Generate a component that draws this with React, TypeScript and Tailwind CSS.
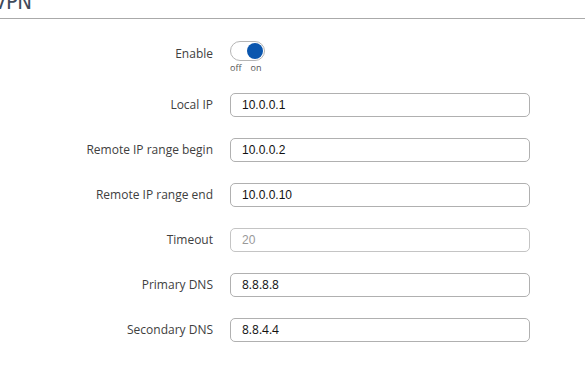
export default function App() {
  const rows: { label: string; value: string; disabled?: boolean; font?: string }[] = [
    { label: 'Local IP', value: '10.0.0.1', font: 'arial' },
    { label: 'Remote IP range begin', value: '10.0.0.2', font: 'arial' },
    { label: 'Remote IP range end', value: '10.0.0.10', font: 'arial' },
    { label: 'Timeout', value: '20', disabled: true, font: 'arial' },
    { label: 'Primary DNS', value: '8.8.8.8' },
    { label: 'Secondary DNS', value: '8.8.4.4' },
  ];

  return (
    <div className="w-[585px] h-[373px] bg-white overflow-hidden font-['Open_Sans',sans-serif] text-[12px] text-[#404040]">
      {/* section header */}
      <div className="h-[19px] border-b border-[#aaaaaa] overflow-hidden">
        <h2 className="-mt-[7px] -ml-[7px] text-[22px] leading-[18px] font-['DejaVu_Sans_Condensed',sans-serif] text-[#3f4a5a] tracking-tight">
          VPN
        </h2>
      </div>

      {/* enable toggle */}
      <div className="flex items-start mt-[22px]">
        <div className="w-[213px] text-right pt-[4px]">Enable</div>
        <div className="ml-[17px] flex flex-col">
          <div className="w-[35px] h-[20px] rounded-full border border-[#b5b5b5] bg-white flex items-center justify-end pr-[1px]">
            <div className="w-[16px] h-[16px] rounded-full bg-[#0a56ae]" />
          </div>
          <div className="flex gap-[9px] text-[9px] leading-[11px] mt-[1px] text-[#555]">
            <span>off</span>
            <span>on</span>
          </div>
        </div>
      </div>

      {/* fields */}
      <div className="flex flex-col gap-[21px] mt-[20px]">
        {rows.map((r) => (
          <div key={r.label} className="flex items-center h-[24px]">
            <div className="w-[213px] text-right">{r.label}</div>
            <div
              className={`ml-[17px] w-[300px] h-[24px] rounded-[5px] border flex items-center pl-[11px] ${
                r.disabled ? 'border-[#c4c4c4] text-[#999]' : 'border-[#b0b0b0] text-[#111]'
              } ${r.font === 'arial' ? "font-['Liberation_Sans',sans-serif]" : ''}`}
            >
              {r.value}
            </div>
          </div>
        ))}
      </div>
    </div>
  );
}
